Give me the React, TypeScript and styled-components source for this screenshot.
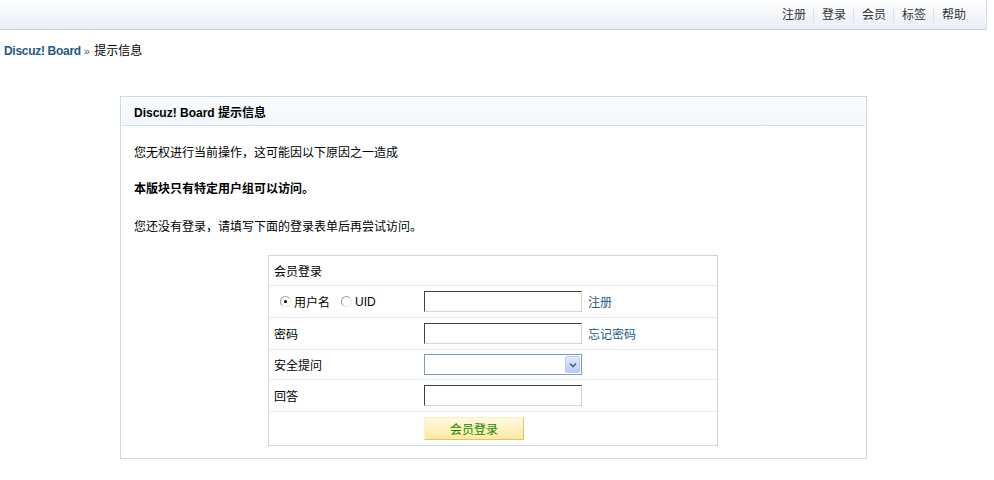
import styled, { createGlobalStyle } from "styled-components"

const GlobalStyle = createGlobalStyle`
  html, body {
    margin: 0;
    padding: 0;
    background: #ffffff;
  }
  body {
    font-family: "Liberation Sans", "Noto Sans CJK SC", sans-serif;
    font-size: 12px;
    color: #000;
  }
`

const linkColor = "#1d5a86"

const Page = styled.div`
  width: 987px;
`

const TopBar = styled.div`
  height: 30px;
  display: flex;
  align-items: center;
  justify-content: flex-end;
  padding-right: 12px;
  background: linear-gradient(#ffffff, #e8eef6);
  border-bottom: 1px solid #c8d4e1;
  border-right: 1px solid #d6dee8;
  box-sizing: border-box;
`

const Menu = styled.a<{ $first?: boolean }>`
  display: block;
  padding: 0 8px;
  line-height: 14px;
  color: #333;
  text-decoration: none;
  border-left: ${(p) => (p.$first ? "none" : "1px solid #dbe2ea")};
  margin-left: ${(p) => (p.$first ? "0" : "-1px")};
`

const Crumbs = styled.div`
  padding: 13px 4px 0;
  line-height: 16px;
  color: #000;
`

const BoardLink = styled.a`
  color: ${linkColor};
  font-weight: bold;
  letter-spacing: -0.3px;
  text-decoration: none;
`

const Arrow = styled.span`
  font-size: 11px;
  color: #555;
  margin: 0 1px 0 0;
`

const Box = styled.div`
  width: 747px;
  margin: 37px 0 0 120px;
  border: 1px solid #cdd8e3;
  box-sizing: border-box;
  padding-bottom: 12px;
`

const BoxTitle = styled.div`
  height: 27px;
  margin: 1px 1px 0;
  display: flex;
  align-items: center;
  padding-left: 12px;
  font-weight: bold;
  background: linear-gradient(#fafcfe, #f1f6fc);
  border-bottom: 1px solid #d2dde7;
`

const Message = styled.p<{ $bold?: boolean; $space?: number }>`
  margin: ${(p) => p.$space ?? 18}px 0 0;
  padding-left: 13px;
  line-height: 18px;
  font-weight: ${(p) => (p.$bold ? "bold" : "normal")};
`

const LoginTable = styled.div`
  width: 450px;
  margin: 19px 0 0 147px;
  border: 1px solid #c9d7e2;
  box-sizing: border-box;
`

const Row = styled.div<{ $h: number; $last?: boolean }>`
  display: grid;
  grid-template-columns: 155px 1fr;
  align-items: center;
  box-sizing: border-box;
  height: ${(p) => p.$h}px;
  border-bottom: ${(p) => (p.$last ? "none" : "1px solid #e3e9ef")};
`

const Label = styled.div`
  padding-left: 5px;
  display: flex;
  align-items: center;
`

const Field = styled.div`
  display: flex;
  align-items: center;
  gap: 6px;
`

const Radio = styled.input.attrs({ type: "radio" })`
  appearance: none;
  width: 11px;
  height: 11px;
  margin: 0 3px 0 0;
  border-radius: 50%;
  border: 1px solid #9a9a9a;
  border-bottom-color: #e6e6e6;
  border-right-color: #e6e6e6;
  background: #fff;
  box-sizing: border-box;
  display: grid;
  place-items: center;
  &:checked::after {
    content: "";
    width: 3px;
    height: 3px;
    border-radius: 50%;
    background: #000;
  }
`

const RadioLabel = styled.label<{ $gap?: number }>`
  display: flex;
  align-items: center;
  margin-left: ${(p) => p.$gap ?? 0}px;
`

const TextInput = styled.input`
  width: 158px;
  height: 21px;
  box-sizing: border-box;
  margin: 0;
  border: 1px solid #d6d3ce;
  border-top-color: #404040;
  border-left-color: #404040;
  background: #fff;
  font: inherit;
`

const SelectWrap = styled.div`
  position: relative;
  width: 158px;
  height: 21px;
`

const Select = styled.select`
  appearance: none;
  width: 100%;
  height: 100%;
  box-sizing: border-box;
  margin: 0;
  border: 1px solid #7f9db9;
  background: #fff;
  font: inherit;
`

const SelectArrow = styled.span`
  position: absolute;
  top: 2px;
  right: 2px;
  width: 15px;
  height: 17px;
  box-sizing: border-box;
  border: 1px solid #b8cdf5;
  border-radius: 2px;
  background: linear-gradient(#e2ebfe, #b7cbf6);
  display: grid;
  place-items: center;
  pointer-events: none;
`

const FormLink = styled.a`
  color: ${linkColor};
  text-decoration: none;
`

const SubmitButton = styled.button`
  width: 100px;
  height: 23px;
  margin: 0;
  padding: 0;
  box-sizing: border-box;
  border: 1px solid #fdf1c2;
  border-right-color: #e4c164;
  border-bottom-color: #e4c164;
  background: linear-gradient(#fffbe0, #fde9a2);
  color: #158700;
  font: inherit;
  font-size: 12px;
`

const menuItems = ["注册", "登录", "会员", "标签", "帮助"]

export default function App() {
  return (
    <Page>
      <GlobalStyle />
      <TopBar>
        {menuItems.map((m, i) => (
          <Menu key={m} href="#" $first={i === 0}>
            {m}
          </Menu>
        ))}
      </TopBar>

      <Crumbs>
        <BoardLink href="#">Discuz! Board</BoardLink>
        <Arrow> »</Arrow> 提示信息
      </Crumbs>

      <Box>
        <BoxTitle>Discuz! Board 提示信息</BoxTitle>
        <Message>您无权进行当前操作，这可能因以下原因之一造成</Message>
        <Message $bold>本版块只有特定用户组可以访问。</Message>
        <Message $space={20}>您还没有登录，请填写下面的登录表单后再尝试访问。</Message>

        <LoginTable>
          <Row $h={30}>
            <Label>会员登录</Label>
          </Row>
          <Row $h={32}>
            <Label>
              <RadioLabel $gap={6}>
                <Radio name="loginfield" defaultChecked />
                用户名
              </RadioLabel>
              <RadioLabel $gap={11}>
                <Radio name="loginfield" />
                UID
              </RadioLabel>
            </Label>
            <Field>
              <TextInput />
              <FormLink href="#">注册</FormLink>
            </Field>
          </Row>
          <Row $h={32}>
            <Label>密码</Label>
            <Field>
              <TextInput type="password" />
              <FormLink href="#">忘记密码</FormLink>
            </Field>
          </Row>
          <Row $h={30}>
            <Label>安全提问</Label>
            <Field>
              <SelectWrap>
                <Select>
                  <option></option>
                </Select>
                <SelectArrow>
                  <svg width="8" height="6" viewBox="0 0 8 6">
                    <path d="M1 1.5 L4 4.5 L7 1.5" fill="none" stroke="#4d6185" strokeWidth="1.6" />
                  </svg>
                </SelectArrow>
              </SelectWrap>
            </Field>
          </Row>
          <Row $h={32}>
            <Label>回答</Label>
            <Field>
              <TextInput />
            </Field>
          </Row>
          <Row $h={33} $last>
            <div />
            <Field>
              <SubmitButton>会员登录</SubmitButton>
            </Field>
          </Row>
        </LoginTable>
      </Box>
    </Page>
  )
}
